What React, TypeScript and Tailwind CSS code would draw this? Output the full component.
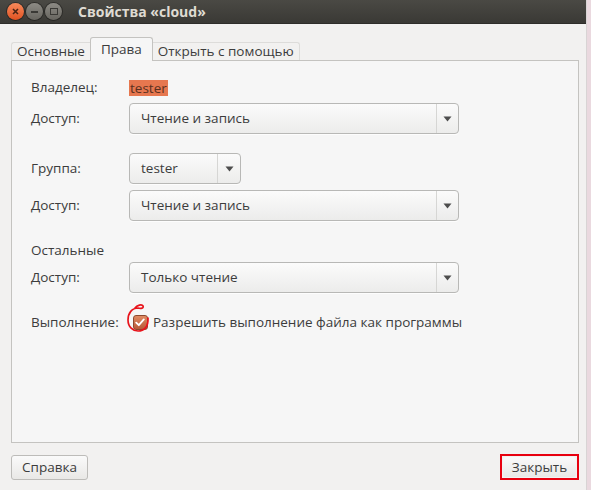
const FONT = { fontFamily: '"Open Sans", "Noto Sans", "DejaVu Sans", sans-serif' }

function Combo({ value, width, sepAt }: { value: string; width: string; sepAt: string }) {
  return (
    <div
      className={`${width} h-[31px] flex items-center rounded-[4px] border border-[#b8b8b6] bg-gradient-to-b from-[#fbfbfb] to-[#ececeb] shadow-[0_1px_0_rgba(255,255,255,0.8)]`}
    >
      <span className="flex-1 pl-[11px] text-[13.5px] text-[#3c3c3c]">{value}</span>
      <div className={`${sepAt} h-[29px] border-l border-[#d6d6d4] flex items-center justify-center`}>
        <svg width="9" height="6" viewBox="0 0 9 6">
          <path d="M0.5 0.5 L8.5 0.5 L4.5 5.5 Z" fill="#4d4d4d" />
        </svg>
      </div>
    </div>
  )
}

function Row({ label, children, className = '' }: { label: string; children: React.ReactNode; className?: string }) {
  return (
    <div className={`flex items-center ${className}`}>
      <span className="w-[98px] text-[13.5px] text-[#3c3c3c]">{label}</span>
      {children}
    </div>
  )
}

export default function App() {
  return (
    <div className="w-[591px] h-[490px] flex bg-[#ead9df] overflow-hidden" style={FONT}>
      <div className="w-[587px] h-full flex flex-col bg-[#f2f1f0] border-r border-[#d8d4d4]">
        {/* title bar */}
        <div className="h-[24px] flex items-center bg-gradient-to-b from-[#4a4944] to-[#3a3935] border-b border-[#2e2d2a]">
          <div className="flex items-center gap-[2px] pl-[7px]">
            <div className="w-[17px] h-[17px] rounded-full bg-gradient-to-b from-[#f7895a] to-[#e0511f] flex items-center justify-center shadow-[0_0_0_1px_rgba(0,0,0,0.35)]">
              <svg width="7" height="7" viewBox="0 0 7 7">
                <path d="M1 1 L6 6 M6 1 L1 6" stroke="#4a2414" strokeWidth="1.6" />
              </svg>
            </div>
            <div className="w-[17px] h-[17px] rounded-full bg-gradient-to-b from-[#8d8b85] to-[#67655f] flex items-center justify-center shadow-[0_0_0_1px_rgba(0,0,0,0.35)]">
              <div className="w-[7px] h-[2px] bg-[#3a3935]" />
            </div>
            <div className="w-[17px] h-[17px] rounded-full bg-gradient-to-b from-[#8d8b85] to-[#67655f] flex items-center justify-center shadow-[0_0_0_1px_rgba(0,0,0,0.35)]">
              <div className="w-[8px] h-[7px] border-[1.5px] border-[#3a3935]" />
            </div>
          </div>
          <span className="ml-[16px] text-[14px] font-bold text-[#dfdbd2]">Свойства «cloud»</span>
        </div>

        {/* tabs + panel */}
        <div className="flex-1 flex flex-col pl-[11px] pt-[12px]">
          <div className="flex items-end h-[24px] text-[13.5px] text-[#3c3c3c]">
            <div className="h-[18px] px-[5px] flex items-center border-l border-t border-[#dddcda] rounded-tl-[3px]">Основные</div>
            <div className="h-[24px] px-[10px] -mb-px flex items-center bg-[#f6f6f6] border border-b-0 border-[#c4c3c0] rounded-t-[3px] z-10">Права</div>
            <div className="h-[18px] px-[5px] flex items-center border-r border-t border-[#dddcda] rounded-tr-[3px]">Открыть с помощью</div>
          </div>
          <div className="w-[568px] h-[383px] bg-[#f6f6f6] border border-[#c4c3c0] flex flex-col pl-[19px] pt-[18px]">
            <Row label="Владелец:" className="h-[17px]">
              <span className="px-px bg-[#e6774f] text-[#5a3020] text-[13.5px] leading-[16px]">tester</span>
            </Row>
            <Row label="Доступ:" className="mt-[7px]">
              <Combo value="Чтение и запись" width="w-[330px]" sepAt="w-[22px]" />
            </Row>
            <Row label="Группа:" className="mt-[19px]">
              <Combo value="tester" width="w-[112px]" sepAt="w-[23px]" />
            </Row>
            <Row label="Доступ:" className="mt-[6px]">
              <Combo value="Чтение и запись" width="w-[330px]" sepAt="w-[22px]" />
            </Row>
            <div className="mt-[19px] h-[17px] text-[13.5px] text-[#3c3c3c]">Остальные</div>
            <Row label="Доступ:" className="mt-[5px]">
              <Combo value="Только чтение" width="w-[330px]" sepAt="w-[22px]" />
            </Row>
            <Row label="Выполнение:" className="mt-[19px]">
              <div className="relative w-[20px] h-[20px] flex items-center justify-center">
                <div className="ml-[2px] w-[15px] h-[15px] rounded-[3px] bg-gradient-to-b from-[#e08a62] to-[#b85a38] border border-[#8c4a30] flex items-center justify-center">
                  <svg width="10" height="9" viewBox="0 0 10 9">
                    <path d="M1.2 4.6 L3.8 7.2 L8.8 1.4" stroke="#ffffff" strokeWidth="1.8" fill="none" strokeLinecap="round" strokeLinejoin="round" />
                  </svg>
                </div>
                <svg className="absolute -left-[3px] -top-[9px]" width="26" height="32" viewBox="0 0 26 32">
                  <path
                    d="M9 5 C 11 2, 16 1, 17 3 C 18 5, 15 6, 12 5 C 6 5, 2 10, 2 17 C 2 24, 7 28, 12 28 C 18 28, 22.5 24, 22 15"
                    stroke="#e8141c"
                    strokeWidth="1.7"
                    fill="none"
                    strokeLinecap="round"
                  />
                </svg>
              </div>
              <span className="ml-[4px] text-[13.5px] text-[#3c3c3c]">Разрешить выполнение файла как программы</span>
            </Row>
          </div>
          <div className="w-[568px] flex justify-between items-center mt-[11px]">
            <button className="w-[77px] h-[25px] rounded-[3px] border border-[#bdbcb9] bg-gradient-to-b from-[#fafafa] to-[#e9e8e6] text-[13.5px] text-[#3c3c3c]">
              Справка
            </button>
            <div className="w-[79px] h-[26px] border-2 border-[#e8000f] flex items-center justify-center">
              <div className="w-[73px] h-[20px] rounded-[3px] bg-gradient-to-b from-[#fafafa] to-[#e9e8e6] flex items-center justify-center text-[13.5px] text-[#3c3c3c]">
                Закрыть
              </div>
            </div>
          </div>
        </div>
      </div>
    </div>
  )
}
